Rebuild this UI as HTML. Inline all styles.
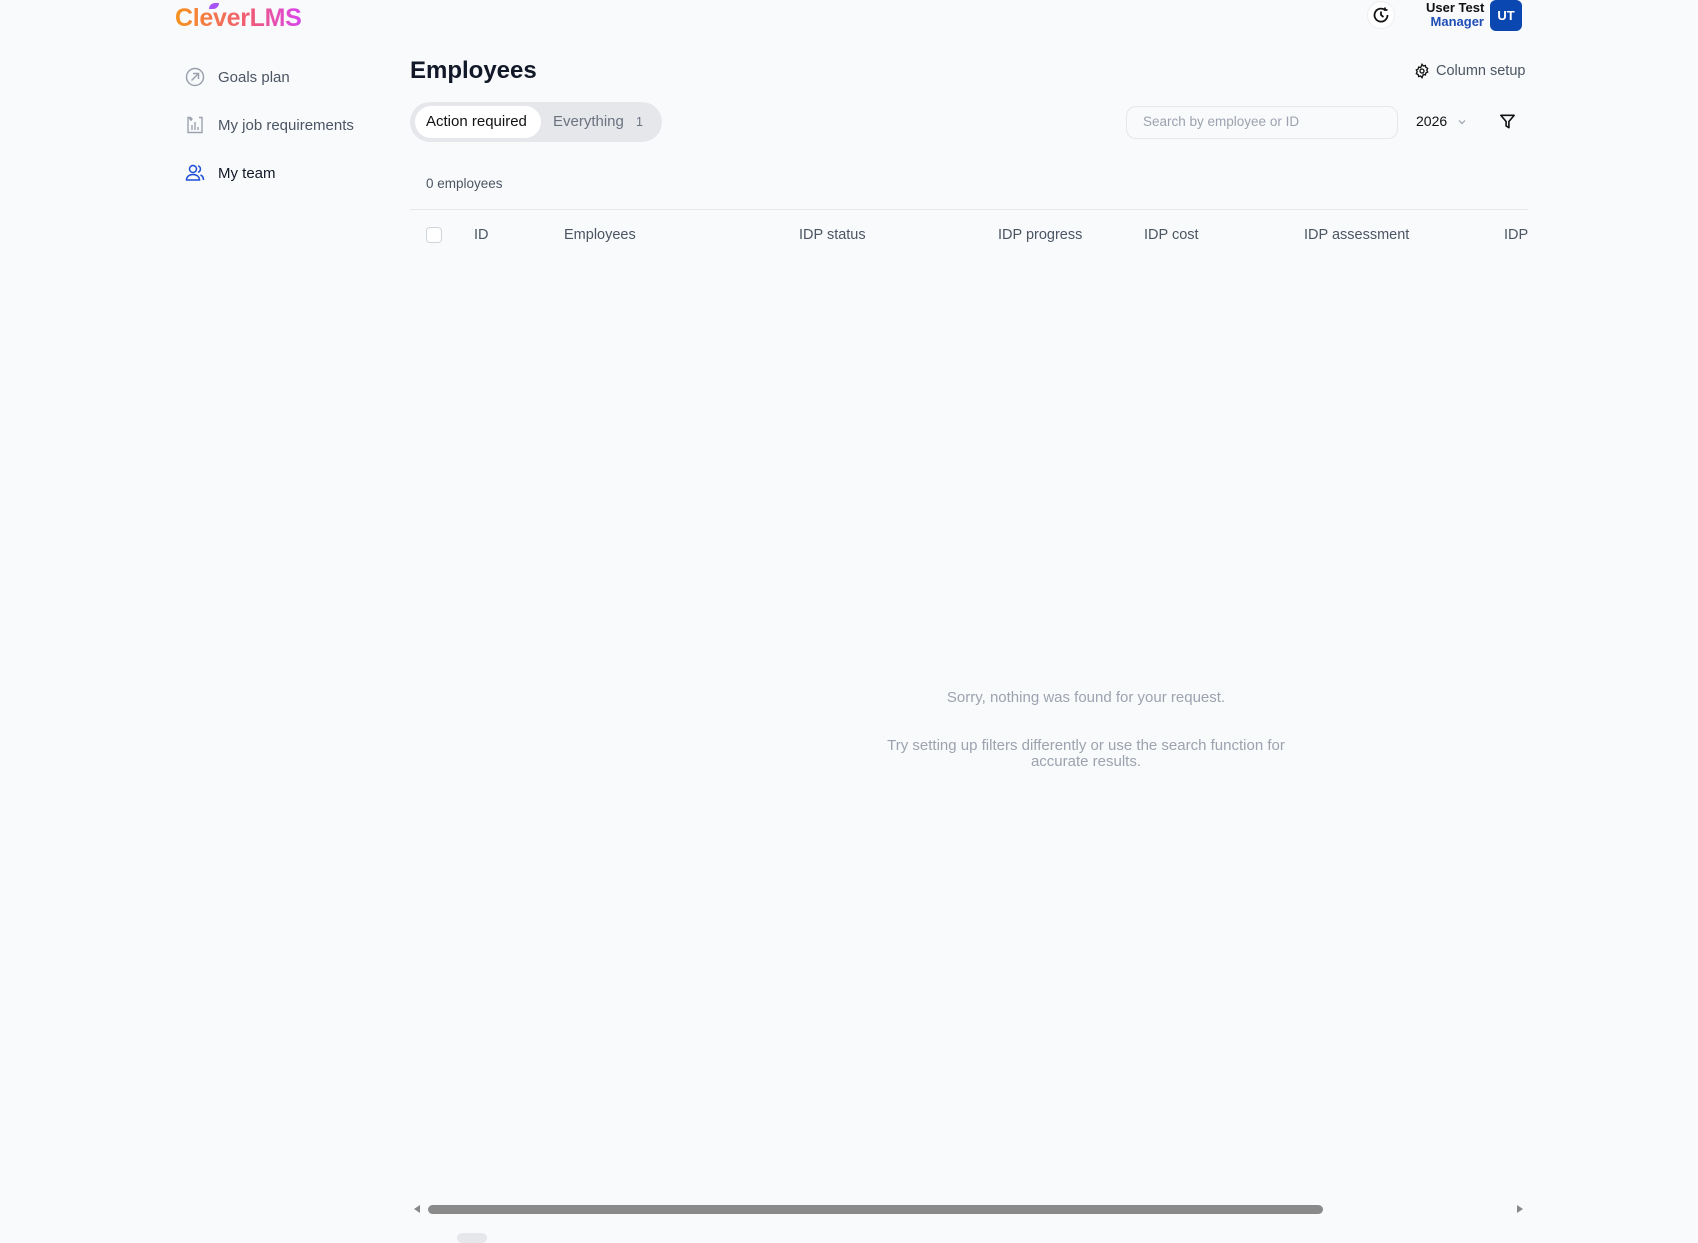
<!DOCTYPE html>
<html><head><meta charset="utf-8"><style>
*{margin:0;padding:0;box-sizing:border-box}
body{width:1698px;height:1237px;background:#f9fafb;font-family:"Liberation Sans",sans-serif;position:relative;overflow:hidden;color:#111827}
.a{position:absolute;white-space:nowrap}
.nav{font-size:15px;color:#4b5563}
.th{font-size:14.5px;color:#4b5563;top:227px}
</style></head><body>
<div class="a" style="left:175px;top:4px;font-size:25px;font-weight:bold;letter-spacing:-0.3px;background:linear-gradient(90deg,#f7931e,#ef5a7a 60%,#d946ef);-webkit-background-clip:text;color:transparent">CleverLMS</div>
<div class="a" style="left:209px;top:3px;width:10px;height:6px;background:#a855f7;border-radius:6px 0 6px 0"></div>

<svg class="a" style="left:185px;top:67px" width="20" height="20" viewBox="0 0 20 20" fill="none" stroke="#9ca3af" stroke-width="1.5"><circle cx="10" cy="10" r="8.5"/><path d="M6.5 13.5l7-7M8 6.5h5.5V12"/></svg>
<div class="a nav" style="left:218px;top:69px">Goals plan</div>
<svg class="a" style="left:185px;top:115px" width="20" height="20" viewBox="0 0 20 20" fill="none" stroke="#9ca3af" stroke-width="1.4"><path d="M6 2.5H3v15h14v-15h-3M6 6V3.5M4.5 4.5L6 3l1.5 1.5M7 15v-5M10 15V7M13 15v-3"/></svg>
<div class="a nav" style="left:218px;top:117px">My job requirements</div>
<svg class="a" style="left:185px;top:163px" width="20" height="20" viewBox="0 0 20 20" fill="none" stroke="#1d4ed8" stroke-width="1.5"><circle cx="8" cy="6" r="3.5"/><path d="M1.5 17c0-3.5 3-5.5 6.5-5.5s6.5 2 6.5 5.5zM13 2.8a3.4 3.4 0 010 6.5M15.5 12c2 .8 3 2.5 3 5"/></svg>
<div class="a nav" style="left:218px;top:165px;color:#111827">My team</div>

<div class="a" style="left:1367px;top:1px;width:28px;height:28px;border-radius:50%;background:#fff;border:1px solid #eceef1"></div>
<svg class="a" style="left:1372px;top:6px" width="18" height="18" viewBox="0 0 18 18" fill="none" stroke="#111" stroke-width="1.8"><path d="M15.5 9A6.5 6.5 0 1 1 13 4M9 5.5V9l2.5 2M13 1.5V4h2.5"/></svg>
<div class="a" style="left:1426px;top:0px;font-size:13px;font-weight:bold;color:#111;text-align:right;width:58px">User Test</div>
<div class="a" style="left:1426px;top:14px;font-size:13px;font-weight:bold;color:#1e4fb5;text-align:right;width:58px">Manager</div>
<div class="a" style="left:1490px;top:0;width:32px;height:31px;background:#0b47b1;border-radius:6px;color:#fff;font-size:13px;font-weight:bold;text-align:center;line-height:31px">UT</div>

<div class="a" style="left:410px;top:57px;font-size:24px;font-weight:bold;color:#111827">Employees</div>
<svg class="a" style="left:1414px;top:63px" width="16" height="16" viewBox="0 0 24 24" fill="none" stroke="#111" stroke-width="2"><circle cx="12" cy="12" r="3"/><path d="M12 2l2 2.5 3-.8.8 3 2.7 1.3-1.3 2.8 1.3 2.8-2.7 1.3-.8 3-3-.8L12 22l-2-2.5-3 .8-.8-3-2.7-1.3L4.8 13.2 3.5 10.4l2.7-1.3.8-3 3 .8z"/></svg>
<div class="a" style="left:1436px;top:63px;font-size:14.5px;color:#4b5563">Column setup</div>

<div class="a" style="left:410px;top:102px;width:252px;height:40px;background:#e5e7eb;border-radius:20px"></div>
<div class="a" style="left:415px;top:106px;width:126px;height:32px;background:#fff;border-radius:16px"></div>
<div class="a" style="left:426px;top:113px;font-size:15px;color:#111">Action required</div>
<div class="a" style="left:553px;top:113px;font-size:15px;color:#6b7280">Everything</div>
<div class="a" style="left:636px;top:115px;font-size:12.5px;color:#6b7280">1</div>

<div class="a" style="left:1126px;top:106px;width:272px;height:33px;border:1px solid #e5e7eb;border-radius:10px;background:#f9fafb"></div>
<div class="a" style="left:1143px;top:114px;font-size:13.5px;color:#9ca3af">Search by employee or ID</div>
<div class="a" style="left:1416px;top:113px;font-size:14px;color:#111">2026</div>
<svg class="a" style="left:1457px;top:118px" width="10" height="8" viewBox="0 0 10 8" fill="none" stroke="#9ca3af" stroke-width="1.2"><path d="M2 2.5l3 3 3-3"/></svg>
<svg class="a" style="left:1499px;top:113px" width="17" height="17" viewBox="0 0 18 18" fill="none" stroke="#111" stroke-width="1.7" stroke-linejoin="round"><path d="M2 2.5h14l-5.5 6.5v6.5l-3-1.8V9z"/></svg>

<div class="a" style="left:426px;top:176px;font-size:13.5px;color:#4b5563">0 employees</div>
<div class="a" style="left:410px;top:209px;width:1118px;height:1px;background:#e5e7eb"></div>
<div class="a" style="left:426px;top:227px;width:16px;height:16px;border:1px solid #d1d5db;border-radius:4px;background:#fff"></div>
<div class="a th" style="left:474px">ID</div>
<div class="a th" style="left:564px">Employees</div>
<div class="a th" style="left:799px">IDP status</div>
<div class="a th" style="left:998px">IDP progress</div>
<div class="a th" style="left:1144px">IDP cost</div>
<div class="a th" style="left:1304px">IDP assessment</div>
<div class="a th" style="left:1504px;width:24px;overflow:hidden">IDP</div>

<div class="a" style="left:786px;top:689px;width:600px;text-align:center;font-size:15px;color:#9ca3af">Sorry, nothing was found for your request.</div>
<div class="a" style="left:786px;top:738px;width:600px;text-align:center;font-size:15px;color:#9ca3af;line-height:16px">Try setting up filters differently or use the search function for<br>accurate results.</div>

<div class="a" style="left:414px;top:1205px;width:0;height:0;border-top:4px solid transparent;border-bottom:4px solid transparent;border-right:6px solid #888"></div>
<div class="a" style="left:428px;top:1205px;width:895px;height:9px;background:#8a8a8a;border-radius:5px"></div>
<div class="a" style="left:1517px;top:1205px;width:0;height:0;border-top:4px solid transparent;border-bottom:4px solid transparent;border-left:6px solid #888"></div>
<div class="a" style="left:457px;top:1233px;width:30px;height:10px;background:#e5e7eb;border-radius:6px"></div>
</body></html>
